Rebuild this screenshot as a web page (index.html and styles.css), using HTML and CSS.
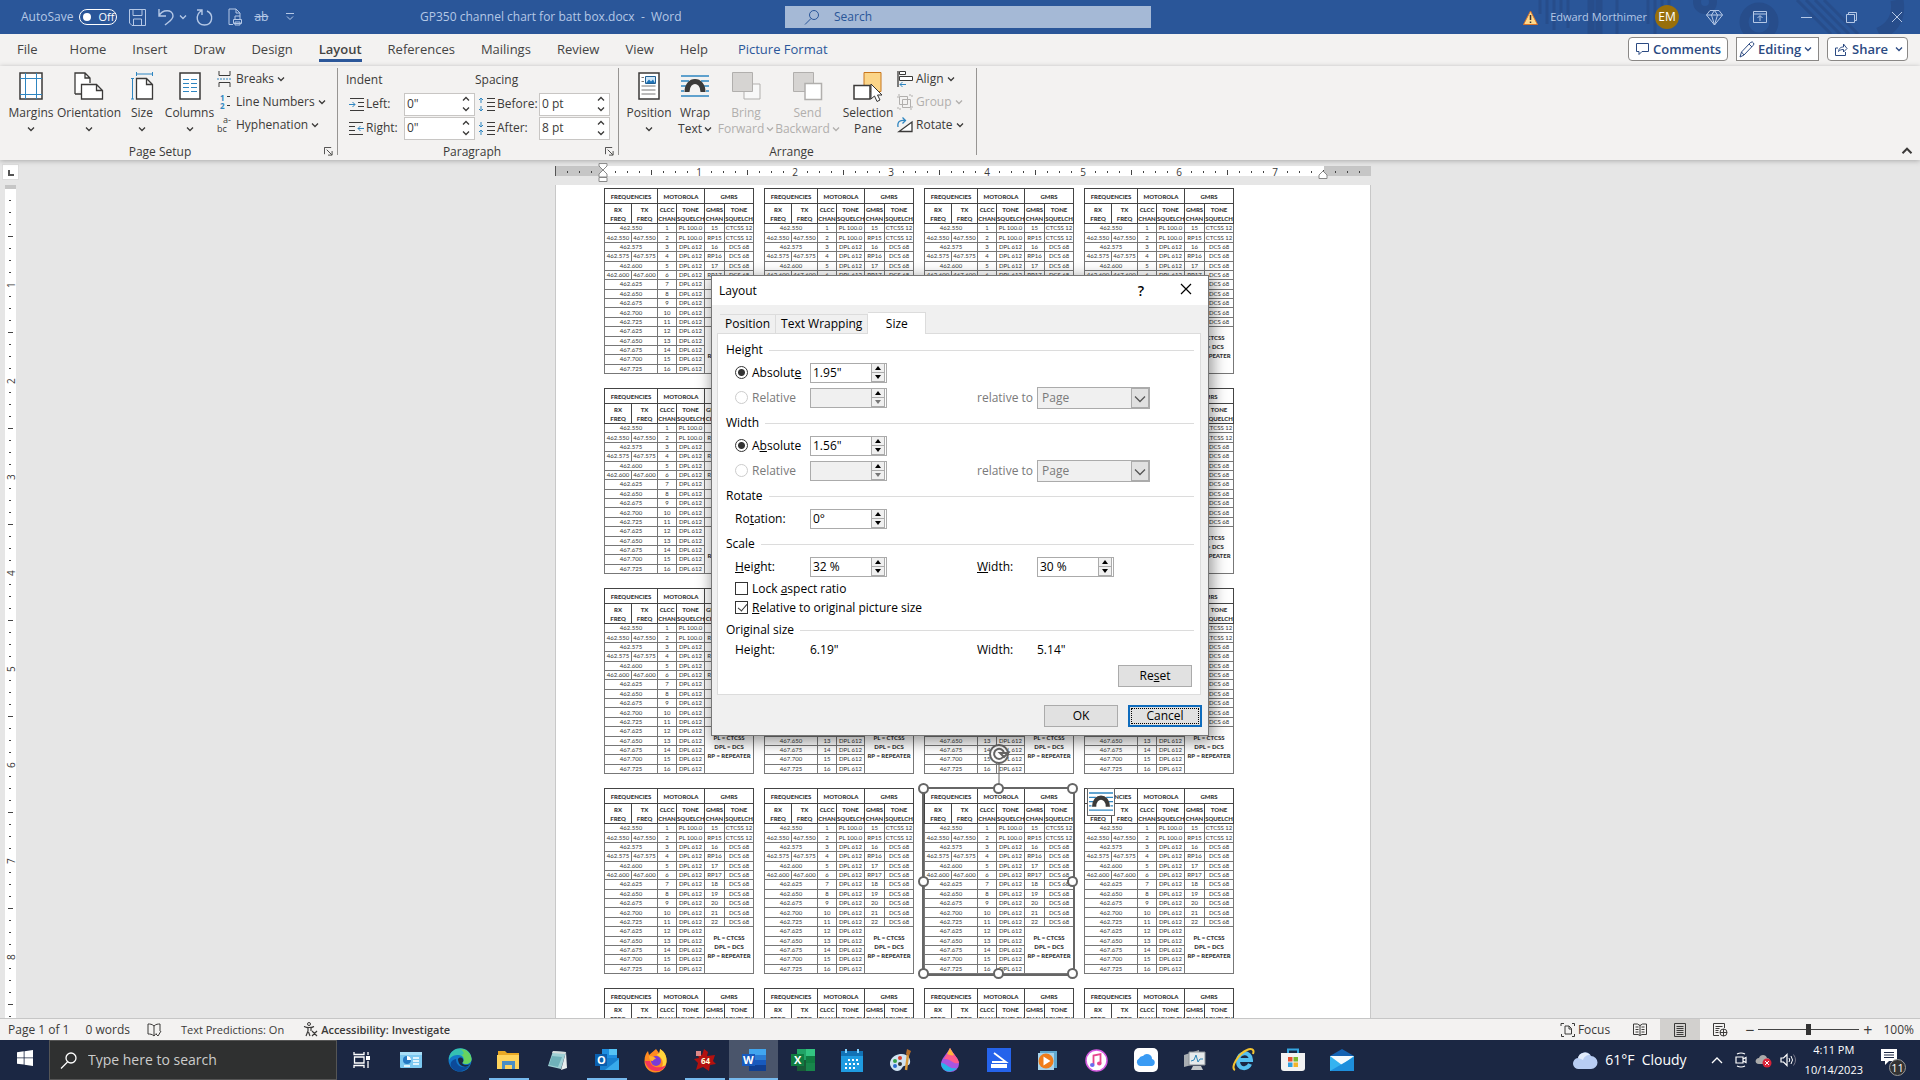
FILE: index.html
```
<!DOCTYPE html>
<html lang="en">
<head>
<meta charset="utf-8">
<title>GP350 channel chart for batt box.docx - Word</title>
<link rel="stylesheet" href="styles.css">
</head>
<body>
<svg class="defs" aria-hidden="true">
  <symbol id="caret" viewBox="0 0 8 8"><path d="M1 2.500 4 5.500 7 2.500" fill="none" stroke="currentColor" stroke-width="1.300"/></symbol>
  <symbol id="caret-up" viewBox="0 0 8 8"><path d="M1 5.500 4 2.500 7 5.500" fill="none" stroke="currentColor" stroke-width="1.300"/></symbol>
  <symbol id="launch" viewBox="0 0 10 10"><path d="M.500 8V.500H8M3 3l5.500 5.500M9 4.500V9H4.500" fill="none" stroke="currentColor"/></symbol>
  <symbol id="tri-up" viewBox="0 0 6 4"><path d="M0 4 3 0 6 4z" fill="currentColor"/></symbol>
  <symbol id="tri-down" viewBox="0 0 6 4"><path d="M0 0 3 4 6 0z" fill="currentColor"/></symbol>
  <symbol id="arch" viewBox="0 0 28 28"><path d="M0 3.500h28M0 8.500h8M20 8.500h8M0 13.500h5M23 13.500h5M0 18.500h3M25 18.500h3M0 23.500h28" stroke="#2f86c1" stroke-width="1.500"/><path d="M6 19.500c0-14 16-14 16 0" fill="none" stroke="#3b3a39" stroke-width="5"/></symbol>
</svg>

<header class="titlebar">
  <svg class="pattern" width="385" height="34"><g fill="none" stroke="#274d8b" stroke-width="3"><path d="M5 0v14M12 0v24M19 0v30M26 0v20M33 0v28M82 0v34M113 0v24M120 0v34M127 0v18M134 0v24" /><path d="M56 0v34h8V0" stroke-width="7"/><circle cx="170" cy="2" r="8" stroke-width="8"/><circle cx="224" cy="22" r="15" stroke-width="9"/><path d="M262 0l34 34M271 0l34 34M280 0l34 34M289 0l34 34"/><path d="M362 0q4 24-18 34" stroke-width="13"/></g></svg>
  <div class="quick">
    <span id="autosave">AutoSave</span>
    <button class="toggle" role="switch" aria-checked="false" aria-labelledby="autosave"><i></i>Off</button>
    <button class="save" aria-label="Save"><svg width="17" height="17"><path d="M.5.5h16v16H3l-2.500-2.500zM4 .5v6h9v-6M4.500 16v-6h8v6" fill="none" stroke="currentColor"/></svg></button>
    <button class="undo" aria-label="Undo"><svg width="16" height="18"><path d="M1 1v7h7M1 8C4 1 15 1 15 8c0 4-5 6-8 9" fill="none" stroke="currentColor" stroke-width="1.400"/></svg><svg width="8" height="8"><use href="#caret"/></svg></button>
    <button class="redo" aria-label="Repeat"><svg width="17" height="17"><path d="M1 1h5v5M5.500 1.500C-1 6 0 16 8.500 16 17 16 18 5 11 2" fill="none" stroke="currentColor" stroke-width="1.400"/></svg></button>
    <button class="preview" aria-label="Print Preview"><svg width="15" height="18"><path d="M5 16.500H1V1h7l4 4v3M8 1v4h4M7 11V8h5v3M5.500 15.500v-4h8v4zM7 14h5v3H7z" fill="none" stroke="currentColor"/></svg></button>
    <button class="strike" aria-label="Strikethrough"><s>ab</s></button>
    <button class="more" aria-label="Customize"><svg width="8" height="8"><path d="M0 .5h8M1 3.500l3 3 3-3" fill="none" stroke="currentColor"/></svg></button>
  </div>
  <div class="doc-name">GP350 channel chart for batt box.docx&nbsp; -&nbsp; Word</div>
  <label class="search"><svg width="16" height="16"><circle cx="10" cy="6" r="4.500" fill="none" stroke="currentColor"/><path d="M7 9.500 1 15.500" stroke="currentColor"/></svg><input type="search" placeholder="Search" aria-label="Search"></label>
  <div class="account">
    <svg width="15" height="15"><path d="M7.500 1 14.500 14.500H.5z" fill="#ffd98a" stroke="#d8732a"/><path d="M7.500 5v5M7.500 11.500v1.500" stroke="#333" stroke-width="1.500"/></svg>
    <span class="who">Edward Morthimer</span><span class="avatar">EM</span>
    <button aria-label="Premium"><svg width="17" height="17"><path d="M4 1.500h9l3.500 4.500-8 10L.5 6zM.5 6h16M5.500 6l3 10 3-10-3-4.500z" fill="none" stroke="currentColor"/></svg></button>
    <button class="display" aria-label="Ribbon Display Options"><svg width="14" height="12"><path d="M.5.500h13v11H.5zM.5 3h13M7 10V5M4.500 7 7 4.500 9.500 7" fill="none" stroke="currentColor"/></svg></button>
    <button aria-label="Minimize"><svg width="11" height="11"><path d="M0 5.500h11" stroke="currentColor"/></svg></button>
    <button aria-label="Restore"><svg width="11" height="11"><path d="M.5 2.500h8v8h-8zM2.500 2V.5h8v8H9" fill="none" stroke="currentColor"/></svg></button>
    <button aria-label="Close"><svg width="12" height="12"><path d="M1 1l10 10M11 1 1 11" stroke="currentColor"/></svg></button>
  </div>
</header>

<nav class="tabs">
  <a href="#" class="file">File</a><a href="#">Home</a><a href="#">Insert</a><a href="#">Draw</a><a href="#">Design</a><a href="#" class="active">Layout</a><a href="#">References</a><a href="#">Mailings</a><a href="#">Review</a><a href="#">View</a><a href="#">Help</a><a href="#" class="context">Picture Format</a>
  <div class="actions">
    <button class="comments"><svg width="13" height="12"><path d="M.5.500h12v8H6l-3 3v-3H.5z" fill="none" stroke="currentColor"/></svg>Comments</button>
    <button class="editing"><svg width="16" height="17"><path d="M1 16l1.500-5L11.500 1.500q2-1.500 3 .5 1 1-.5 2.500L5 14zM10 3l3 3M2.500 11 5 14" fill="none" stroke="currentColor"/></svg>Editing<svg width="8" height="8"><use href="#caret"/></svg></button>
    <button class="share"><svg width="13" height="13"><path d="M3 5H.5v7.500h10V9M3.500 8.500C4 5 6 4 8.500 4V1L12 5.500 8.500 9V6.500C6 6.500 5 7 3.500 8.500z" fill="none" stroke="currentColor"/></svg>Share<svg class="last" width="8" height="8"><use href="#caret"/></svg></button>
  </div>
</nav>

<section class="ribbon">
  <div class="group page-setup">
    <div class="tools">
      <button class="big margins"><svg width="24" height="28"><path d="M1 1h22v26H1z" fill="#fff" stroke="#3b3a39" stroke-width="1.500"/><path d="M6.500 1v26M17.500 1v26M1 6.500h22M1 22.500h22" stroke="#2f86c1"/></svg><span>Margins</span><svg width="8" height="8"><use href="#caret"/></svg></button>
      <button class="big orientation"><svg width="30" height="28"><path d="M1 22V1h10l5 5v5M11 1v5h5M7 22H1" fill="#fff" stroke="#3b3a39" stroke-width="1.300"/><path d="M7.500 12.500h15l6 6V27h-21zM22.500 12.500v6h6" fill="#fff" stroke="#3b3a39" stroke-width="1.300"/></svg><span>Orientation</span><svg width="8" height="8"><use href="#caret"/></svg></button>
      <button class="big size"><svg width="22" height="28"><path d="M5.500 6.500h10l6 6V27h-16zM15.500 6.500v6h6" fill="#fff" stroke="#3b3a39" stroke-width="1.300"/><path d="M5 2h17M5.500 0v4M21.500 0v4M1.500 6v21M0 6.500h3M0 27h3" stroke="#2f86c1"/></svg><span>Size</span><svg width="8" height="8"><use href="#caret"/></svg></button>
      <button class="big columns"><svg width="22" height="28"><path d="M1 1h20v26H1z" fill="#fff" stroke="#3b3a39" stroke-width="1.500"/><path d="M4 7.500h6M12 7.500h6M4 11.500h6M12 11.500h6M4 15.500h6M12 15.500h6M4 19.500h6M12 19.500h6" stroke="#2f86c1"/></svg><span>Columns</span><svg width="8" height="8"><use href="#caret"/></svg></button>
      <div class="stack">
        <button><svg width="16" height="16"><path d="M2 0v4.500h11V0M2 16v-4.500h11V16" fill="none" stroke="#3b3a39"/><path d="M0 8h15" stroke="#2f86c1" stroke-dasharray="2 1"/></svg>Breaks<svg width="8" height="8"><use href="#caret"/></svg></button>
        <button><svg width="16" height="16"><text x="3" y="7" class="num">1</text><text x="3" y="15" class="num">2</text><path d="M10 2.500h3M10 11.500h3" stroke="#3b3a39"/></svg>Line Numbers<svg width="8" height="8"><use href="#caret"/></svg></button>
        <button><svg width="16" height="16"><text x="6" y="6" class="hyph">a-</text><text x="0" y="15" class="hyph">bc</text></svg>Hyphenation<svg width="8" height="8"><use href="#caret"/></svg></button>
      </div>
    </div>
    <div class="caption">Page Setup<svg width="9" height="9"><use href="#launch"/></svg></div>
  </div>
  <div class="group paragraph">
    <div class="fields">
      <span class="head">Indent</span><span class="head">Spacing</span>
      <label for="ind-left"><svg width="15" height="14"><path d="M1 1.500h14M9 5.500h6M9 9.500h6M1 13.500h14" stroke="#3b3a39"/><path d="M0 7.500h6M3.500 5 6 7.500 3.500 10" fill="none" stroke="#2f86c1"/></svg>Left:</label>
      <div class="spin"><input id="ind-left" value='0"'><span><svg width="8" height="8"><use href="#caret-up"/></svg><svg width="8" height="8"><use href="#caret"/></svg></span></div>
      <label for="sp-before"><svg width="17" height="15"><path d="M9 1.500h8M9 5.500h8M9 9.500h8M9 13.500h8" stroke="#3b3a39"/><path d="M3 6V1M1 3l2-2 2 2M3 9v5M1 12l2 2 2-2" fill="none" stroke="#2f86c1"/></svg>Before:</label>
      <div class="spin"><input id="sp-before" value="0 pt"><span><svg width="8" height="8"><use href="#caret-up"/></svg><svg width="8" height="8"><use href="#caret"/></svg></span></div>
      <label for="ind-right"><svg width="15" height="14"><path d="M0 1.500h14M0 5.500h6M0 9.500h6M0 13.500h14" stroke="#3b3a39"/><path d="M15 7.500H9M11.500 5 9 7.500l2.500 2.500" fill="none" stroke="#2f86c1"/></svg>Right:</label>
      <div class="spin"><input id="ind-right" value='0"'><span><svg width="8" height="8"><use href="#caret-up"/></svg><svg width="8" height="8"><use href="#caret"/></svg></span></div>
      <label for="sp-after"><svg width="17" height="15"><path d="M9 1.500h8M9 5.500h8M9 9.500h8M9 13.500h8" stroke="#3b3a39"/><path d="M3 1v5M1 4l2 2 2-2M3 14V9M1 11l2-2 2 2" fill="none" stroke="#2f86c1"/></svg>After:</label>
      <div class="spin"><input id="sp-after" value="8 pt"><span><svg width="8" height="8"><use href="#caret-up"/></svg><svg width="8" height="8"><use href="#caret"/></svg></span></div>
    </div>
    <div class="caption">Paragraph<svg width="9" height="9"><use href="#launch"/></svg></div>
  </div>
  <div class="group arrange">
    <div class="tools">
      <button class="big position"><svg width="22" height="28"><path d="M1 1h20v26H1z" fill="#fff" stroke="#3b3a39" stroke-width="1.500"/><path d="M3.500 5.500H6M3.500 9.500H6M3.500 14h14M3.500 18h14M3.500 22h14" stroke="#777"/><path d="M7.500 4.500h10v7h-10z" fill="#cfe6f7" stroke="#1f5f93"/><path d="M8 11l3-3.500 2 2 2-2 2 3.500z" fill="#1f74b8"/></svg><span>Position</span><svg width="8" height="8"><use href="#caret"/></svg></button>
      <button class="big wrap"><svg width="28" height="28"><use href="#arch"/></svg><span>Wrap</span><span>Text<svg width="8" height="8"><use href="#caret"/></svg></span></button>
      <button class="big bring" disabled><svg width="29" height="28"><path d="M12 12h16v15H12z" fill="#f8f8f8" stroke="#b1afad"/><path d="M.5.500h20v19H.5z" fill="#d6d4d2" stroke="#b1afad"/></svg><span>Bring</span><span>Forward<svg width="8" height="8"><use href="#caret"/></svg></span></button>
      <button class="big send" disabled><svg width="29" height="28"><path d="M.5.500h20v19H.5z" fill="#d6d4d2" stroke="#b1afad"/><path d="M12 11.500h16.500v16H12z" fill="#fff" stroke="#b1afad" stroke-width="1.500"/></svg><span>Send</span><span>Backward<svg width="8" height="8"><use href="#caret"/></svg></span></button>
      <button class="big selection"><svg width="30" height="30"><path d="M11 .5h17v19H11z" fill="#fbd588" stroke="#c8761c"/><path d="M1 13.500h16V27H1z" fill="#fff" stroke="#3b3a39" stroke-width="1.500"/><path d="M18 12v15l3.500-3 2.500 5.500 3-1.500-2.500-5H29z" fill="#fff" stroke="#333"/></svg><span>Selection</span><span>Pane</span></button>
      <div class="stack">
        <button><svg width="16" height="16"><path d="M1 0v16" stroke="#3b3a39" stroke-width="1.300"/><path d="M2.500.500h6v3h-6zM2.500 5.500h13v4h-13z" fill="#fff" stroke="#3b3a39"/><path d="M9 13.500H3M5.500 11 3 13.500 5.500 16" fill="none" stroke="#2f86c1"/></svg>Align<svg width="8" height="8"><use href="#caret"/></svg></button>
        <button disabled><svg width="16" height="16"><path d="M2.500 2.500h8v8h-8zM5.500 5.500h8v8h-8z" fill="none" stroke="currentColor"/><path d="M1 4V1h3M12 1h3v3M15 12v3h-3M4 15H1v-3" fill="none" stroke="currentColor" stroke-dasharray="2 1"/></svg>Group<svg width="8" height="8"><use href="#caret"/></svg></button>
        <button><svg width="16" height="16"><path d="M2 14.500h13V5z" fill="#fff" stroke="#3b3a39" stroke-width="1.300"/><path d="M1 10C0 4 4 3 8 3.500M5.500.500l3 3-3 3" fill="none" stroke="#2f86c1" stroke-width="1.300"/></svg>Rotate<svg width="8" height="8"><use href="#caret"/></svg></button>
      </div>
    </div>
    <div class="caption">Arrange</div>
  </div>
  <button class="collapse" aria-label="Collapse the Ribbon"><svg width="12" height="12" viewBox="0 0 8 8"><use href="#caret-up" width="8" height="8"/></svg></button>
</section>

<main class="workspace">
  <button class="tab-stop" aria-label="Left Tab"><svg width="6" height="6"><path d="M1 0v5h5" fill="none" stroke="#555" stroke-width="2"/></svg></button>
  <div class="h-ruler"><div class="ticks"></div>
    <svg class="indent-left" width="10" height="20"><path d="M1 .5h8V3L5 7l4 4v3H1v-3l4-4-4-4zM1 14.500h8v4H1z" fill="#fff" stroke="#888"/></svg>
    <svg class="indent-right" width="10" height="9"><path d="M1 8.500h8V5L5 1 1 5z" fill="#fff" stroke="#888"/></svg>
  </div>
  <div class="v-ruler"><div class="ticks"></div></div>
  <div class="page"><div class="charts"></div></div>

  <form class="dialog" role="dialog" aria-label="Layout">
    <div class="dialog-title">Layout<button type="button" class="help" aria-label="Help">?</button><button type="button" aria-label="Close"><svg width="12" height="12"><path d="M1 1l10 10M11 1 1 11" stroke="#000" stroke-width="1.200"/></svg></button></div>
    <div class="dialog-tabs"><button type="button">Position</button><button type="button">Text Wrapping</button><button type="button" class="active">Size</button></div>
    <div class="panel">
      <h2>Height</h2>
      <div class="row">
        <label><input type="radio" name="h" checked>Absolut<u>e</u></label>
        <div class="updown"><input value='1.95"' aria-label="Absolute height"><button type="button" aria-label="Up"><svg width="6" height="4"><use href="#tri-up"/></svg></button><button type="button" aria-label="Down"><svg width="6" height="4"><use href="#tri-down"/></svg></button></div>
      </div>
      <div class="row off">
        <label><input type="radio" name="h" disabled>Relative</label>
        <div class="updown"><input disabled aria-label="Relative height"><button type="button" aria-label="Up"><svg width="6" height="4"><use href="#tri-up"/></svg></button><button type="button" aria-label="Down" disabled><svg width="6" height="4"><use href="#tri-down"/></svg></button></div>
        <label for="h-page">relative to</label>
        <div class="combo"><select id="h-page" disabled><option>Page</option></select><span><svg width="10" height="10" viewBox="0 0 8 8"><path d="M0 2l4 4 4-4" fill="none" stroke="#555"/></svg></span></div>
      </div>
      <h2>Width</h2>
      <div class="row">
        <label><input type="radio" name="w" checked>A<u>b</u>solute</label>
        <div class="updown"><input value='1.56"' aria-label="Absolute width"><button type="button" aria-label="Up"><svg width="6" height="4"><use href="#tri-up"/></svg></button><button type="button" aria-label="Down"><svg width="6" height="4"><use href="#tri-down"/></svg></button></div>
      </div>
      <div class="row off">
        <label><input type="radio" name="w" disabled>Relative</label>
        <div class="updown"><input disabled aria-label="Relative width"><button type="button" aria-label="Up"><svg width="6" height="4"><use href="#tri-up"/></svg></button><button type="button" aria-label="Down" disabled><svg width="6" height="4"><use href="#tri-down"/></svg></button></div>
        <label for="w-page">relative to</label>
        <div class="combo"><select id="w-page" disabled><option>Page</option></select><span><svg width="10" height="10" viewBox="0 0 8 8"><path d="M0 2l4 4 4-4" fill="none" stroke="#555"/></svg></span></div>
      </div>
      <h2>Rotate</h2>
      <div class="row">
        <label for="rot">Ro<u>t</u>ation:</label>
        <div class="updown"><input id="rot" value="0°"><button type="button" aria-label="Up"><svg width="6" height="4"><use href="#tri-up"/></svg></button><button type="button" aria-label="Down"><svg width="6" height="4"><use href="#tri-down"/></svg></button></div>
      </div>
      <h2>Scale</h2>
      <div class="row">
        <label for="sc-h"><u>H</u>eight:</label>
        <div class="updown"><input id="sc-h" value="32 %"><button type="button" aria-label="Up"><svg width="6" height="4"><use href="#tri-up"/></svg></button><button type="button" aria-label="Down"><svg width="6" height="4"><use href="#tri-down"/></svg></button></div>
        <label for="sc-w"><u>W</u>idth:</label>
        <div class="updown"><input id="sc-w" value="30 %"><button type="button" aria-label="Up"><svg width="6" height="4"><use href="#tri-up"/></svg></button><button type="button" aria-label="Down"><svg width="6" height="4"><use href="#tri-down"/></svg></button></div>
      </div>
      <label class="check"><input type="checkbox"><span>Lock <u>a</u>spect ratio</span></label>
      <label class="check"><input type="checkbox" checked><span><u>R</u>elative to original picture size</span></label>
      <h2>Original size</h2>
      <div class="row plain"><span>Height:</span><span>6.19"</span><span>Width:</span><span>5.14"</span></div>
      <button type="button" class="push reset">Re<u>s</u>et</button>
    </div>
    <div class="dialog-foot"><button type="button" class="push">OK</button><button type="button" class="push focus">Cancel</button></div>
  </form>
</main>

<footer class="status">
  <span>Page 1 of 1</span><span class="words">0 words</span>
  <svg width="15" height="14"><path d="M7 3v10M7 3C5 1 3 1 1 1v10c2 0 4 0 6 2 1-2 2-2 3-2M7 3c2-2 4-2 6-2v7M9 11l2 2 3-5" fill="none" stroke="currentColor"/></svg>
  <span class="predict">Text Predictions: On</span>
  <svg width="15" height="15"><circle cx="6" cy="2" r="1.500" fill="none" stroke="currentColor"/><path d="M1 4.500l4 1.500v3l-2 5M11 4.500 8 6v3M1 4.500q5 2 10 0M9 9l5 5M14 9l-5 5M5.500 10 7 14" fill="none" stroke="currentColor" stroke-width="1.200"/></svg>
  <span class="access">Accessibility: Investigate</span>
  <div class="views">
    <button class="focus-mode"><svg width="14" height="14"><path d="M0 3V.500h3M11 .500h2.500V3M13.500 11v2.500H11M3 13.500H.500V11M4 3h4l2.500 2.500V11H4zM8 3v3h2.500" fill="none" stroke="currentColor"/></svg>Focus</button>
    <button aria-label="Read Mode"><svg width="14" height="13"><path d="M7 2v10.500M.500 1h4L7 2.500 9.500 1h4v10.500H9L7 12.500 5 11.500H.500zM2.500 4h3M2.500 6.500h3M2.500 9h3M8.500 4h3M8.500 6.500h3M8.500 9h3" fill="none" stroke="currentColor"/></svg></button>
    <button class="current" aria-label="Print Layout"><svg width="12" height="14"><path d="M.500.500h11v13H.500zM2.500 3.500h7M2.500 5.500h7M2.500 7.500h7M2.500 9.500h7M2.500 11.500h7" fill="none" stroke="currentColor"/></svg></button>
    <button aria-label="Web Layout"><svg width="15" height="14"><path d="M6 12.500H.500V.500h11V5M2.500 3.500h7M2.500 5.500h4M2.500 7.500h3M2.500 9.500h3" fill="none" stroke="currentColor"/><circle cx="10.500" cy="9.500" r="3.500" fill="none" stroke="currentColor"/><path d="M7 9.500h7M10.500 6v7" stroke="currentColor"/></svg></button>
    <span class="zoom"><span>−</span><input type="range" min="0" max="100" value="50" aria-label="Zoom"><span>+</span></span>
    <span>100%</span>
  </div>
</footer>

<footer class="taskbar">
  <button class="start" aria-label="Start"><svg width="16" height="16"><path d="M0 2.200 6.700 1.300v6.200H0zM7.500 1.200 16 0v7.500H7.500zM0 8.300h6.700v6.300L0 13.700zM7.500 8.300H16V16l-8.500-1.200z" fill="#fff"/></svg></button>
  <label class="find"><svg width="17" height="17"><circle cx="11" cy="6" r="5" fill="none" stroke="#fff" stroke-width="1.300"/><path d="M7.500 10 1 16.500" stroke="#fff" stroke-width="1.300"/></svg><input type="text" placeholder="Type here to search" aria-label="Type here to search"></label>
  <div class="apps">
    <button aria-label="Task View"><svg width="18" height="16"><path d="M1 0v2.500h10V0M1 16v-2.500h10V16M1.500 5h9.500v6H1.500zM15 0v3M15 9v7" fill="none" stroke="#fff" stroke-width="1.300"/><path d="M13 4h4v4h-4z" fill="#fff"/></svg></button>
    <button aria-label="Control Panel"><svg width="22" height="18"><rect width="22" height="16" y="1" rx="1" fill="#7cc8f0"/><path d="M0 1h22v3H0z" fill="#a8def8"/><circle cx="7" cy="9" r="4" fill="#2579c4"/><path d="M7 9V5a4 4 0 0 1 4 4z" fill="#fff"/><path d="M13 7h6M13 10h6M13 13h6M4 15h6" stroke="#fff" stroke-width="1.500"/></svg></button>
    <button aria-label="Edge"><svg width="24" height="24"><circle cx="12" cy="12" r="11.500" fill="#1277c8"/><path d="M1 10C3-3 23-3 23.500 11c0 5-6 6-9 4 3-4 0-8-4-8S3 8 1 12z" fill="#35c1b2"/><path d="M12 1c7 0 11 5 11.500 10 0 5-6 6-9 4 2-3 2-6-1-8 4-1 2-4-1.500-6z" fill="#68d35f"/><path d="M8 11c0 7 6 10 13 7-4 6-12 7-17 2-3-4-1-8 4-9z" fill="#0c4a99"/><path d="M10 11c1-2 4-2 5 0s0 3-1 4c1 2 5 3 8 1-3 5-12 3-12-5z" fill="#1b2743"/></svg></button>
    <button class="open" aria-label="File Explorer"><svg width="23" height="20"><path d="M1 1h7l2 2h12v16H1z" fill="#e9a825"/><path d="M0 5h22v14H0z" fill="#ffd35c"/><path d="M5 19v-8h13v8h-3v-4H8v4z" fill="#4b8ec4"/></svg></button>
    <button aria-label="Notepad"><svg width="23" height="23"><path d="M7 2l13 1-5 17L2 17z" fill="#9fd0d5"/><path d="M20 3l1 16-6 2z" fill="#e8eeee"/><path d="M7 2l13 1-1 2-13-1z" fill="#d6dcdc"/><path d="M6 7l10 1-4 10-9-2z" fill="#6fb1ba"/></svg></button>
    <button class="open" aria-label="Outlook"><svg width="24" height="22"><path d="M7 0h15v11H7z" fill="#1f8ee0"/><path d="M14 0h8v6h-8z" fill="#55c3f5"/><path d="M5 9h19v12H5z" fill="#1780cf"/><path d="M24 10v11H10z" fill="#38aaeb"/><rect y="5" width="12" height="12" fill="#0a5fae"/><text x="2" y="15" class="logo">O</text></svg></button>
    <button aria-label="Firefox"><svg width="23" height="24"><path d="M12 1l3 4c1-1 1-3 1-4 5 3 7 8 6.500 13A11 11 0 0 1 .500 13C.500 8 2 5 4 3l1 4z" fill="#ff8a1f"/><path d="M16 1c5 3 7 8 6.500 13-1 4-3 7-6 8 4-6 3-12-4-15l3-2z" fill="#ffd43b"/><path d="M1 13c1 6 6 10 11 10s8-2 10-6c-6 4-15 3-16-4z" fill="#f4365d"/><circle cx="12" cy="13" r="5" fill="#7a3bd8"/><path d="M5 8c4 0 6 1 7 3-3 0-2 2-4 2S5 10 5 8z" fill="#ffb02e"/></svg></button>
    <button class="open" aria-label="AIDA64"><svg width="24" height="24"><path d="M11 1l4 3-1 4 8-1-2 6 3 3-6 1-1 6-6-4-7 3 2-7-4-4 5-1-2-5 5 2z" fill="#b3110f"/><path d="M3 3h5v5H3z" fill="#d88"/><text x="8" y="16" class="sixty">64</text></svg></button>
    <button class="open current" aria-label="Word"><svg width="24" height="22"><path d="M7 0h17v6H7z" fill="#41a5ee"/><path d="M7 6h17v5H7z" fill="#2b7cd3"/><path d="M7 11h17v5H7z" fill="#185abd"/><path d="M7 16h17v6H7z" fill="#103f91"/><rect y="5" width="13" height="12" fill="#185abd"/><text x="1" y="15" class="logo">W</text></svg></button>
    <button aria-label="Excel"><svg width="24" height="22"><path d="M6 0h9v11H6z" fill="#21a366"/><path d="M15 0h9v7h-9z" fill="#33c481"/><path d="M15 7h9v7h-9z" fill="#107c41"/><path d="M6 11h9v11H6z" fill="#185c37"/><path d="M15 14h9v8h-9z" fill="#18864b"/><rect y="5" width="13" height="12" fill="#107c41"/><text x="3" y="15" class="logo">X</text></svg></button>
    <button aria-label="Calendar"><svg width="22" height="23"><path d="M0 2h22v21H0z" fill="#1f9be0"/><path d="M0 2h22v5H0z" fill="#1272b5"/><path d="M5 0v4M17 0v4" stroke="#7fd1ff" stroke-width="2"/><path d="M7 11h12M4 15h15M4 19h12" stroke="#fff" stroke-width="2" stroke-dasharray="2 2"/></svg></button>
    <button aria-label="Paint"><svg width="24" height="23"><path d="M11 5C3 6-1 13 2 18s9 5 11 1 7-1 8-5-2-10-10-9z" fill="#cfe3f2"/><circle cx="6" cy="12" r="2" fill="#37a447"/><circle cx="11" cy="9" r="2" fill="#d8402f"/><circle cx="6" cy="17" r="2" fill="#2b6ed0"/><circle cx="11" cy="15" r="2" fill="#333"/><path d="M19 5l-2 16" stroke="#d99a3d" stroke-width="2.500"/><path d="M18 0l4 2-2 5-3-2z" fill="#b86f2a"/></svg></button>
    <button aria-label="Paint 3D"><svg width="20" height="24"><path d="M10 0c4 7 9 11 9 16a9 8 0 0 1-18 0c0-5 5-9 9-16z" fill="#a855e0"/><path d="M10 0c4 7 9 11 9 15-6 2-8-5-15-4 2-4 5-7 6-11z" fill="#ff5a8c"/><path d="M10 0l4 7c-2 1-4 0-7-1z" fill="#ffb53c"/><path d="M1 15c6 0 8 7 16 5-4 5-15 6-16-5z" fill="#25b4e8"/></svg></button>
    <button aria-label="Scan"><svg width="24" height="24"><path d="M0 0h24v24H0z" fill="#2563eb"/><path d="M4 16h16v4H4z" fill="#fff"/><path d="M7 5l12 9H5" fill="none" stroke="#fff" stroke-width="1.800"/></svg></button>
    <button aria-label="Media Player"><svg width="22" height="21"><path d="M3 1h17v17H3z" fill="#5fa8cf"/><path d="M1 3h16v17H1z" fill="#a8d3ea"/><circle cx="9" cy="11" r="7.500" fill="#ef7d1a"/><path d="M6.500 6.500v9l7-4.500z" fill="#fff"/></svg></button>
    <button aria-label="iTunes"><svg width="23" height="23"><circle cx="11.500" cy="11.500" r="10.500" fill="#fff" stroke="#d65be0" stroke-width="1.500"/><path d="M8.500 15.500V6.500l7-1.500v9" fill="none" stroke="#e7468f" stroke-width="1.800"/><ellipse cx="7.300" cy="16" rx="2.300" ry="2" fill="#6a6cf0"/><ellipse cx="14.300" cy="14.500" rx="2.300" ry="2" fill="#e7468f"/></svg></button>
    <button aria-label="iCloud"><svg width="24" height="24"><rect width="24" height="24" rx="5" fill="#fff"/><path d="M6 18a4 4 0 0 1-1-7.500A4 4 0 0 1 9 8a5 5 0 0 1 9 3 3.600 3.600 0 0 1 0 7z" fill="#3a9bf4"/></svg></button>
    <button aria-label="Performance Monitor"><svg width="23" height="22"><path d="M1 6l15-5v13L1 18z" fill="#a8adb2"/><path d="M6 3h16v13H6z" fill="#e6eaec" stroke="#8b9197"/><path d="M8 12l3-1 2-5 2 7 2-3h3" fill="none" stroke="#2d86b8"/><path d="M10 17h8l2 4H8z" fill="#c3c7ca"/></svg></button>
    <button aria-label="Internet Explorer"><svg width="24" height="24"><path d="M6 12h13c0-9-13-9-13 1 0 9 10 9 12 3" fill="none" stroke="#55c0f0" stroke-width="4"/><path d="M3 22C-2 20 6 6 15 2c4-2 8-1 6 4" fill="none" stroke="#f4c430" stroke-width="2"/></svg></button>
    <button aria-label="Microsoft Store"><svg width="24" height="24"><path d="M7 6V1.500h10V6" fill="none" stroke="#35a6e0" stroke-width="2"/><path d="M0 5h24v15q0 3-3 3H3q-3 0-3-3z" fill="#f2f2f2"/><path d="M7 9h4.500v4.500H7z" fill="#e8502f"/><path d="M12.500 9H17v4.500h-4.500z" fill="#7cb82f"/><path d="M7 14.500h4.500V19H7z" fill="#2f9fe0"/><path d="M12.500 14.500H17V19h-4.500z" fill="#f4b52a"/></svg></button>
    <button aria-label="Mail"><svg width="24" height="22"><path d="M0 7l12-7 12 7v15H0z" fill="#1262b3"/><path d="M0 7h24v15H0z" fill="#35b3f0"/><path d="M0 7h24L12 16z" fill="#f3fafe"/><path d="M0 22l24-14v14z" fill="#1e8fdc"/></svg></button>
  </div>
  <div class="tray">
    <svg width="24" height="20"><path d="M6 19a5.500 5.500 0 0 1-1-11A7 7 0 0 1 18 6a6.500 6.500 0 0 1 0 13z" fill="#b8cdf3"/><path d="M5 8A7 7 0 0 1 17 5c-4 0-6 2-7 5-2-1-4-2-5-2z" fill="#e3ecfb"/></svg>
    <span class="weather">61°F&nbsp; Cloudy</span>
    <svg class="up" width="12" height="8"><path d="M1 7l5-5 5 5" fill="none" stroke="#fff" stroke-width="1.300"/></svg>
    <svg width="12" height="16"><path d="M1 5h7v6H1zM8 7l3-1.500v5L8 9M2 2q4-2 8 0M2 14q4 2 8 0" fill="none" stroke="#fff" stroke-width="1.200"/></svg>
    <svg width="17" height="15"><path d="M4 11C-1 11 0 5 4 5c1-4 7-4 8 0 4 0 4 6 0 6z" fill="#aaa"/><circle cx="12" cy="10" r="4.500" fill="#d92338"/><path d="M10 8l4 4M14 8l-4 4" stroke="#fff"/></svg>
    <svg width="17" height="14"><path d="M1 5v4h2.500L7 12.500v-11L3.500 5z" fill="none" stroke="#fff" stroke-width="1.200"/><path d="M9 5q1.500 2 0 4M11 3q3 4 0 8" fill="none" stroke="#fff"/><path d="M13.500 1.500q4 5.500 0 11" fill="none" stroke="#778"/></svg>
    <div class="clock">4:11 PM<br>10/14/2023</div>
    <div class="notes"><svg width="16" height="17"><path d="M0 0h16v12H8l-4 4v-4H0z" fill="#fff"/><path d="M3 3.500h10M3 6h10M3 8.500h10" stroke="#1b2743"/></svg><span>11</span></div>
  </div>
</footer>
<script src="chart.js"></script>
</body>
</html>
```
FILE: styles.css
```
* {
  box-sizing: border-box;
  }
body {
  margin: 0;
  height: 100vh;
  display: flex;
  flex-direction: column;
  overflow: hidden;
  font: 12px/16px "Open Sans", "Noto Sans", sans-serif;
  color: #3b3a39;
  background: #e6e6e6;
  }
button, input, select {
  font: inherit;
  color: inherit;
  margin: 0;
  }
button {
  padding: 0;
  border: 0;
  background: none;
  }
svg {
  flex: none;
  overflow: visible;
  }
.defs {
  position: absolute;
  width: 0;
  height: 0;
  }

/* title bar */
.titlebar {
  position: relative;
  display: flex;
  align-items: center;
  height: 34px;
  flex: none;
  padding: 0 17px 0 21px;
  background: #2a5699;
  color: #b5c8e6;
  }
.titlebar button, .quick, .account {
  display: flex;
  align-items: center;
  }
.pattern {
  position: absolute;
  right: 0;
  top: 0;
  overflow: hidden;
  }
.quick {
  width: 399px;
  }
.quick .toggle {
  width: 38px;
  height: 16px;
  margin: 0 12px 0 6px;
  padding-left: 3px;
  gap: 7px;
  border: 1px solid #fff;
  border-radius: 8px;
  color: #fff;
  font-size: 11px;
  }
.toggle i {
  width: 8px;
  height: 8px;
  border-radius: 50%;
  background: #fff;
  }
.undo {
  margin-left: 12px;
  gap: 5px;
  }
.redo {
  margin: 0 15px 0 9px;
  }
.strike {
  margin: 0 18px 0 11px;
  }
.doc-name {
  width: 365px;
  }
.search {
  display: flex;
  align-items: center;
  flex: 0 1 366px;
  height: 22px;
  padding-left: 19px;
  gap: 14px;
  background: #a5b9d6;
  color: #2a5699;
  }
.search input, .find input {
  flex: 1;
  min-width: 0;
  padding: 0;
  border: 0;
  outline: 0;
  background: none;
  }
.search input::placeholder {
  color: #2a5699;
  }
.account {
  position: relative;
  margin-left: auto;
  }
.who {
  margin: 0 8px 0 12px;
  font-size: 11px;
  white-space: nowrap;
  }
.avatar {
  width: 24px;
  height: 24px;
  margin-right: 27px;
  border-radius: 50%;
  background: #986f0b;
  color: #fff;
  line-height: 24px;
  text-align: center;
  }
.account .display {
  margin-left: 30px;
  }
.display ~ button {
  margin-left: 34px;
  }

/* ribbon tabs */
.tabs {
  display: flex;
  height: 32px;
  flex: none;
  padding: 3px 12px 0 17px;
  gap: 26px;
  background: #f3f2f1;
  font-size: 13px;
  }
.tabs a {
  height: 25px;
  line-height: 24px;
  color: #444;
  text-decoration: none;
  white-space: nowrap;
  }
.tabs .file {
  margin-right: 6px;
  }
.tabs .active {
  border-bottom: 3px solid #2b579a;
  font-weight: 600;
  }
.tabs .context {
  margin-left: 4px;
  color: #2b579a;
  }
.actions {
  display: flex;
  gap: 8px;
  margin-left: auto;
  font-weight: 600;
  color: #2b4a82;
  }
.actions button {
  display: flex;
  align-items: center;
  height: 24px;
  gap: 4px;
  padding: 0 7px;
  border: 1px solid #8a8886;
  border-radius: 4px;
  background: #fff;
  }
.actions .comments {
  width: 100px;
  }
.actions .editing {
  width: 83px;
  padding: 0 2px;
  gap: 3px;
  border-radius: 0;
  }
.actions .share {
  width: 81px;
  padding-right: 4px;
  }
.share .last {
  margin-left: auto;
  }

/* ribbon */
.ribbon {
  position: relative;
  z-index: 1;
  display: flex;
  height: 94px;
  flex: none;
  padding: 2px 0 5px;
  background: #f3f2f1;
  box-shadow: 0 1px 5px #aaa;
  }
.group {
  display: flex;
  flex-direction: column;
  justify-content: space-between;
  border-right: 1px solid #979593;
  }
.tools {
  display: flex;
  }
.page-setup {
  width: 338px;
  padding-left: 3px;
  }
.paragraph {
  width: 281px;
  padding-left: 8px;
  }
.arrange {
  width: 358px;
  padding-left: 8px;
  }
.caption {
  display: flex;
  justify-content: center;
  position: relative;
  margin: 0 20px -2px 0;
  line-height: 10px;
  }
.caption svg {
  position: absolute;
  right: -16px;
  top: 0;
  }
.big {
  display: flex;
  flex-direction: column;
  align-items: center;
  padding-top: 4px;
  }
.big > svg:first-child {
  height: 29px;
  margin-bottom: 4px;
  }
.big > svg:last-child {
  margin-top: 4px;
  }
.big span {
  white-space: nowrap;
  }
.big span svg {
  margin-left: 2px;
  }
button:disabled {
  color: #b1afad;
  }
.margins { width: 56px; }
.orientation { width: 60px; }
.size { width: 46px; }
.columns { width: 49px; }
.position { width: 44px; }
.wrap { width: 48px; }
.bring { width: 54px; }
.send { width: 69px; }
.selection { width: 52px; }
.stack button {
  display: flex;
  align-items: center;
  height: 23px;
  gap: 3px;
  padding: 0 0 2px 3px;
  white-space: nowrap;
  }
.num {
  font: bold 8px "Open Sans";
  fill: #2f86c1;
  }
.hyph {
  font: 9px "Open Sans";
  fill: #3b3a39;
  }
.fields {
  display: grid;
  grid-template-columns: 58px 71px 64px 71px;
  grid-auto-rows: 24px;
  align-items: center;
  }
.head {
  grid-column: span 2;
  }
.fields label {
  display: flex;
  align-items: center;
  gap: 2px;
  padding-left: 3px;
  }
.spin {
  display: flex;
  height: 23px;
  border: 1px solid #c8c6c4;
  background: #fff;
  }
.spin input {
  flex: 1;
  min-width: 0;
  padding: 0 2px;
  border: 0;
  background: none;
  }
.spin span {
  display: flex;
  flex-direction: column;
  justify-content: space-around;
  padding-right: 4px;
  }
.collapse {
  margin: auto 7px 0 auto;
  height: 10px;
  line-height: 10px;
  }

/* document area */
.workspace {
  position: relative;
  display: grid;
  grid-template: 25px minmax(0, 1fr) / 20px 1fr 14px;
  flex: 1;
  min-height: 0;
  }
.tab-stop {
  width: 17px;
  height: 16px;
  margin: 4px 2px;
  border: 1px solid #ddd;
  background: #fff;
  line-height: 8px;
  }
.h-ruler {
  position: relative;
  width: 816px;
  height: 10px;
  margin: 6px auto 0;
  background: linear-gradient(90deg, #c6c6c6 48px, #fff 48px 768px, #c6c6c6 768px);
  border-left: 1px solid #555;
  }
.ticks {
  display: flex;
  font-size: 10px;
  line-height: 10px;
  }
.ticks span {
  display: flex;
  align-items: center;
  justify-content: center;
  flex: none;
  }
.h-ruler .ticks {
  padding-left: 5px;
  }
.h-ruler span {
  width: 12px;
  height: 12px;
  }
.dot::before, .tick::before {
  content: "";
  width: 1px;
  height: 2px;
  background: #444;
  }
.tick::before {
  height: 5px;
  }
.indent-left, .indent-right {
  position: absolute;
  top: -3px;
  left: 42px;
  }
.indent-right {
  top: 4px;
  left: 762px;
  }
.v-ruler {
  grid-area: 2 / 1;
  width: 11px;
  margin-left: 5px;
  overflow: hidden;
  background: #fff;
  border-top: 4px solid #c6c6c6;
  }
.v-ruler .ticks {
  flex-direction: column;
  padding-top: 6px;
  }
.v-ruler span {
  height: 12px;
  writing-mode: vertical-rl;
  transform: rotate(180deg);
  }
.v-ruler .dot::before, .v-ruler .tick::before {
  width: 2px;
  height: 1px;
  }
.v-ruler .tick::before {
  width: 5px;
  }
.page {
  grid-area: 2 / 2;
  width: 816px;
  margin: 0 auto;
  padding: 3px 0 0 48px;
  overflow: hidden;
  background: #fff;
  border: solid #c8c8c8;
  border-width: 0 1px;
  }
.charts {
  display: grid;
  grid-template-columns: repeat(4, 149px);
  grid-auto-rows: 186px;
  gap: 14px 11px;
  }
.chart {
  position: relative;
  }
.chart table {
  width: 149px;
  height: 186px;
  table-layout: fixed;
  border-collapse: collapse;
  border: 1px solid #444;
  font: 6px/8px Lato, sans-serif;
  text-align: center;
  color: #333;
  }
.chart th, .chart td {
  padding: 0;
  border: 1px solid #777;
  white-space: nowrap;
  }
.chart th {
  border-color: #444;
  font-weight: 900;
  line-height: 9px;
  }
.chart .top th {
  height: 15px;
  }
.chart .sub th {
  height: 20px;
  border-top-color: #222;
  }
.chart .legend {
  padding-bottom: 8px;
  line-height: 9px;
  font-weight: 900;
  }
.frame {
  position: absolute;
  inset: -1px -2px -2px -2px;
  border: 2px solid #666;
  }
.frame i {
  position: absolute;
  width: 11px;
  height: 11px;
  margin: -6px;
  border: 2px solid #666;
  border-radius: 50%;
  background: #fff;
  }
.frame .stem {
  position: absolute;
  left: 50%;
  top: -46px;
  margin-left: -11px;
  }
.options {
  position: absolute;
  left: 163px;
  top: 0;
  z-index: 1;
  width: 28px;
  height: 28px;
  border: 1px solid #666;
  background: #fff;
  line-height: 0;
  }

/* layout dialog */
.dialog {
  position: absolute;
  left: 50%;
  top: 115px;
  z-index: 2;
  width: 498px;
  margin-left: -249px;
  border: 1px solid #777;
  background: #f0f0f0;
  box-shadow: 2px 4px 14px 2px rgba(0, 0, 0, .4);
  color: #000;
  }
.dialog-title {
  display: flex;
  align-items: center;
  height: 29px;
  padding: 0 16px 0 7px;
  background: #fff;
  }
.dialog-title .help {
  margin: 0 36px 0 auto;
  font-size: 14px;
  font-weight: 600;
  }
.dialog-tabs {
  display: flex;
  align-items: flex-end;
  height: 28px;
  padding: 0 8px;
  }
.dialog-tabs button {
  height: 19px;
  padding: 0 5px;
  border: 1px solid #dcdcdc;
  border-width: 1px 1px 0 0;
  line-height: 18px;
  white-space: nowrap;
  }
.dialog-tabs button.active {
  position: relative;
  width: 58px;
  height: 22px;
  margin-bottom: -1px;
  background: #fff;
  }
.panel {
  display: flex;
  flex-direction: column;
  height: 362px;
  margin: 0 7px 0 5px;
  padding: 7px 6px;
  padding-left: 8px;
  border: 1px solid #dcdcdc;
  background: #fff;
  }
.panel h2 {
  display: flex;
  align-items: center;
  gap: 6px;
  margin: 4px 0 1px;
  font-size: 12px;
  font-weight: 400;
  line-height: 18px;
  }
.panel h2:first-child {
  margin-top: 0;
  }
.panel h2::after {
  content: "";
  flex: 1;
  height: 1px;
  background: #dcdcdc;
  }
.row {
  display: grid;
  grid-template-columns: 75px 167px 60px 113px;
  align-items: center;
  height: 25px;
  padding-left: 9px;
  }
.row label, .check {
  display: flex;
  align-items: center;
  }
.off {
  color: #7a7a7a;
  }
.panel input[type=radio], .panel input[type=checkbox] {
  appearance: none;
  width: 13px;
  height: 13px;
  margin-right: 4px;
  border: 1px solid #333;
  background: #fff;
  }
.panel input[type=radio] {
  border-radius: 50%;
  }
.panel input[type=radio]:checked {
  background: radial-gradient(#333 0 3px, #fff 4px);
  }
.panel input[type=radio]:disabled {
  border-color: #ccc;
  }
.panel input[type=checkbox]:checked::before {
  content: "";
  display: block;
  width: 4px;
  height: 8px;
  margin: 0 0 0 4px;
  border: solid #333;
  border-width: 0 1px 1px 0;
  transform: rotate(40deg);
  }
.updown {
  display: grid;
  grid-template: 9px 9px / 1fr 15px;
  width: 77px;
  height: 20px;
  border: 1px solid #ababab;
  }
.updown input {
  grid-row: span 2;
  min-width: 0;
  padding: 0 2px;
  border: 0;
  background: none;
  }
.updown input:disabled {
  background: #f0f0f0;
  }
.updown button {
  margin-right: 1px;
  border: 1px solid #ababab;
  border-width: 0 1px 1px;
  background: #f0f0f0;
  line-height: 0;
  color: #000;
  }
.updown button:disabled {
  color: #777;
  }
.combo {
  display: flex;
  height: 22px;
  border: 1px solid #ababab;
  background: #f0f0f0;
  }
.combo select {
  flex: 1;
  appearance: none;
  padding: 0 4px;
  border: 0;
  background: none;
  opacity: 1;
  }
.combo span {
  width: 18px;
  padding: 5px 3px;
  border: 1px solid #ababab;
  background: #e1e1e1;
  line-height: 0;
  }
.check {
  height: 19px;
  padding-left: 9px;
  }
.plain {
  height: 20px;
  }
.push {
  width: 74px;
  height: 22px;
  border: 1px solid #ababab;
  background: #e1e1e1;
  }
.reset {
  margin: auto 2px 0 auto;
  }
.dialog-foot {
  display: flex;
  justify-content: flex-end;
  gap: 10px;
  padding: 10px 6px 8px;
  }
.push.focus {
  border: 2px solid #0f6cbd;
  outline: 1px dotted #000;
  outline-offset: -4px;
  }

/* status bar */
.status {
  position: relative;
  z-index: 3;
  display: flex;
  align-items: center;
  height: 22px;
  flex: none;
  padding-left: 8px;
  background: #f3f2f1;
  border-top: 1px solid #c6c6c6;
  }
.words {
  margin: 0 17px 0 16px;
  }
.predict {
  margin: 0 19px;
  font-size: 11px;
  }
.access {
  margin-left: 3px;
  font-size: 11px;
  font-weight: 600;
  }
.views {
  display: flex;
  align-items: center;
  align-self: stretch;
  margin-left: auto;
  padding-right: 6px;
  }
.views button {
  display: flex;
  align-items: center;
  justify-content: center;
  align-self: stretch;
  width: 40px;
  }
.views .focus-mode {
  width: auto;
  gap: 3px;
  margin-right: 10px;
  }
.views .current {
  background: #d2d0ce;
  }
.zoom {
  display: flex;
  align-items: center;
  gap: 4px;
  margin: 0 11px 0 5px;
  font-size: 16px;
  }
.zoom input {
  appearance: none;
  width: 101px;
  height: 12px;
  background: linear-gradient(#444, #444) center / 100% 1px no-repeat;
  }
.zoom input::-webkit-slider-thumb {
  appearance: none;
  width: 5px;
  height: 11px;
  background: #333;
  }

/* taskbar */
.taskbar {
  position: relative;
  z-index: 3;
  display: flex;
  height: 40px;
  flex: none;
  background: #1b2743;
  color: #fff;
  }
.start {
  width: 49px;
  }
.find {
  display: flex;
  align-items: center;
  width: 288px;
  padding-left: 10px;
  gap: 11px;
  border: 1px solid #555;
  background: #2f3030;
  font-size: 14px;
  }
.find input::placeholder {
  color: #ccc;
  }
.apps {
  display: flex;
  }
.apps button {
  display: flex;
  align-items: center;
  justify-content: center;
  width: 49px;
  }
.apps .open {
  background: linear-gradient(#76b9ed, #76b9ed) bottom / 40px 2px no-repeat;
  }
.apps .current {
  background: linear-gradient(#76b9ed, #76b9ed) bottom / 100% 2px no-repeat #4a556b;
  }
.logo {
  font: bold 11px "Open Sans";
  fill: #fff;
  }
.sixty {
  font: bold 8px "Open Sans";
  fill: #ffd;
  }
.tray {
  display: flex;
  align-items: center;
  gap: 8px;
  margin-left: auto;
  padding-right: 12px;
  }
.weather {
  font-size: 14px;
  white-space: nowrap;
  }
.tray .up {
  margin: 0 4px 0 16px;
  }
.clock {
  margin-right: 2px;
  font-size: 11px;
  line-height: 20px;
  text-align: center;
  }
.notes {
  position: relative;
  width: 27px;
  height: 22px;
  margin-left: 8px;
  }
.notes span {
  position: absolute;
  right: 2px;
  bottom: -5px;
  width: 17px;
  height: 17px;
  border: 1px solid #999;
  border-radius: 50%;
  background: #333;
  font-size: 11px;
  line-height: 15px;
  text-align: center;
  }
```
FILE: chart.js
```
function tick(n) {
  if (n % 8 == 0)
    return n ? '<span>' + Math.abs(n / 8) + '</span>' : '<span></span>';
  return n % 8 == 4 ? '<span class="tick"></span>' : '<span class="dot"></span>';
  }

function drawRulers() {
  var h = '', v = '';
  for (var i = -3; i < 64; i++)
    h += tick(i);
  for (i = 1; i < 70; i++)
    v += tick(i);
  document.querySelector('.h-ruler .ticks').innerHTML = h;
  document.querySelector('.v-ruler .ticks').innerHTML = v;
  }

// one frequency chart, sixteen channels
function chartHTML() {
  var freqs = ['462.550', '462.550', '462.575', '462.575', '462.600', '462.600', '462.625', '462.650',
    '462.675', '462.700', '462.725', '467.625', '467.650', '467.675', '467.700', '467.725'];
  var gmrs = ['15', 'RP15', '16', 'RP16', '17', 'RP17', '18', '19', '20', '21', '22'];
  var html = '<table><colgroup><col style="width:27px"><col style="width:26px"><col style="width:19px">' +
    '<col style="width:28px"><col style="width:20px"><col style="width:29px"></colgroup>' +
    '<tr class="top"><th colspan="2">FREQUENCIES</th><th colspan="2">MOTOROLA</th><th colspan="2">GMRS</th></tr>' +
    '<tr class="sub"><th>RX<br>FREQ</th><th>TX<br>FREQ</th><th>CLCC<br>CHAN</th><th>TONE<br>SQUELCH</th>' +
    '<th>GMRS<br>CHAN</th><th>TONE<br>SQUELCH</th></tr>';
  for (var i = 0; i < 16; i++) {
    html += '<tr>';
    if (i == 1 || i == 3 || i == 5)
      html += '<td>' + freqs[i] + '</td><td>' + freqs[i].replace('462', '467') + '</td>';
    else
      html += '<td colspan="2">' + freqs[i] + '</td>';
    html += '<td>' + (i + 1) + '</td><td>' + (i < 2 ? 'PL 100.0' : 'DPL 612') + '</td>';
    if (i < 11)
      html += '<td>' + gmrs[i] + '</td><td>' + (i < 2 ? 'CTCSS 12' : 'DCS 68') + '</td>';
    if (i == 11)
      html += '<td class="legend" colspan="2" rowspan="5">PL = CTCSS<br>DPL = DCS<br>RP = REPEATER</td>';
    html += '</tr>';
    }
  return html + '</table>';
  }

function drawCharts() {
  var box = document.querySelector('.charts');
  for (var i = 0; i < 20; i++) {
    var div = document.createElement('div');
    div.className = 'chart';
    div.innerHTML = chartHTML();
    box.appendChild(div);
    }
  // the selected picture, with its handles and the layout options button
  var frame = '<div class="frame"><svg class="stem" width="22" height="46"><path d="M11 19v27" stroke="#666"/>' +
    '<circle cx="11" cy="11" r="9" fill="#fff" stroke="#666" stroke-width="2"/>' +
    '<path d="M15 14a5 5 0 1 1 1-4M12 10h8l-4 4z" fill="none" stroke="#666" stroke-width="2"/></svg>';
  [[0, 0], [50, 0], [100, 0], [0, 50], [100, 50], [0, 100], [50, 100], [100, 100]].forEach(function(p) {
    frame += '<i style="left:' + p[0] + '%;top:' + p[1] + '%"></i>';
    });
  frame += '</div><button class="options" aria-label="Layout Options"><svg width="24" height="24"><use href="#arch"/></svg></button>';
  var sel = box.children[14];
  sel.style.zIndex = 1;
  sel.insertAdjacentHTML('beforeend', frame);
  }

drawRulers();
drawCharts();
```
